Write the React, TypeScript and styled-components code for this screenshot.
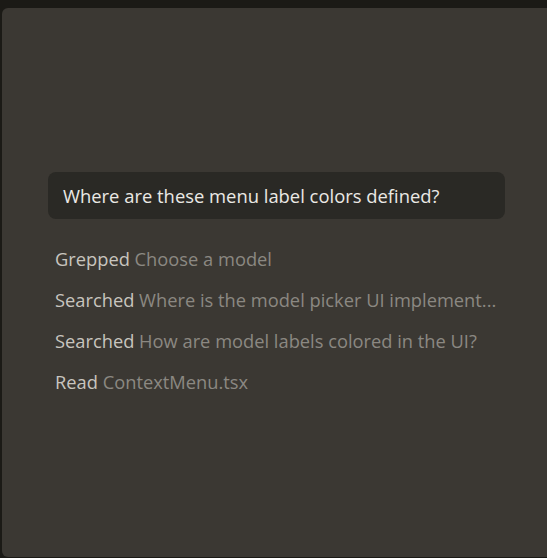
import styled, { createGlobalStyle } from "styled-components";

const GlobalStyle = createGlobalStyle`
    html, body {
        margin: 0;
        padding: 0;
        background-color: #1b1a16;
        font-family: "Open Sans", "Noto Sans", sans-serif;
    }
`;

const Panel = styled.div`
    margin: 8px 0 0 2px;
    height: 549px;
    background-color: #3b3833;
    border-radius: 6px 0 0 6px;
    padding: 164px 42px 0 46px;
    box-sizing: border-box;
`;

const Prompt = styled.div`
    height: 47px;
    display: flex;
    align-items: center;
    padding: 0 15px;
    background-color: #2a2925;
    border-radius: 8px;
    color: #ebe9e5;
    font-size: 18.4px;
    white-space: nowrap;
`;

const Steps = styled.div`
    display: flex;
    flex-direction: column;
    gap: 18px;
    margin-top: 28px;
    padding-left: 7px;
`;

const Step = styled.div`
    font-size: 18.3px;
    line-height: 23px;
    color: #8b8882;
    white-space: nowrap;
    overflow: hidden;
    text-overflow: ellipsis;
`;

const Action = styled.span`
    color: #c8c5bf;
`;

const Target = styled.span`
    color: #8b8882;
`;

const steps = [
    { action: "Grepped", target: "Choose a model" },
    { action: "Searched", target: "Where is the model picker UI implement..." },
    { action: "Searched", target: "How are model labels colored in the UI?" },
    { action: "Read", target: "ContextMenu.tsx" },
];

export default function App() {
    return (
        <>
            <GlobalStyle />
            <Panel>
                <Prompt>{"Where are these menu label colors defined?"}</Prompt>
                <Steps>
                    {steps.map((s, i) => (
                        <Step key={i}>
                            <Action>{s.action}</Action> <Target>{s.target}</Target>
                        </Step>
                    ))}
                </Steps>
            </Panel>
        </>
    );
}
